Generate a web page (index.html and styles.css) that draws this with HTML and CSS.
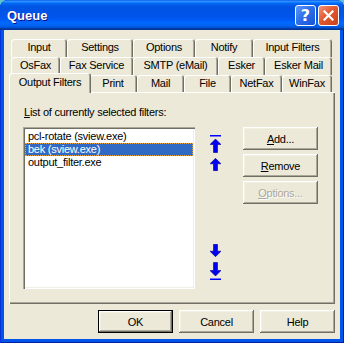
FILE: index.html
```html
<!DOCTYPE html>
<html>
  <head>
    <title>Queue</title>
    <link rel="stylesheet" href="styles.css">
  </head>
  <body>
    <div class="window">
      <div class="titlebar">
        <span class="title">Queue</span>
        <div class="caption-buttons">
          <div class="cap help">?</div>
          <div class="cap close">
            <svg width="11" height="11" viewBox="0 0 11 11">
              <path d="M1.5 1.5 L9.5 9.5 M9.5 1.5 L1.5 9.5" stroke="#fff" stroke-width="2.2" stroke-linecap="square" />
            </svg>
          </div>
        </div>
      </div>

      <div class="client">
        <div class="tabs">
          <div class="tab-row">
            <div class="tab" style="width: 56px">Input</div>
            <div class="tab" style="width: 66px">Settings</div>
            <div class="tab" style="width: 62px">Options</div>
            <div class="tab" style="width: 58px">Notify</div>
            <div class="tab" style="width: 79px">Input Filters</div>
          </div>
          <div class="tab-row">
            <div class="tab" style="width: 49px">OsFax</div>
            <div class="tab" style="width: 73px">Fax Service</div>
            <div class="tab" style="width: 85px">SMTP (eMail)</div>
            <div class="tab" style="width: 47px">Esker</div>
            <div class="tab" style="width: 67px">Esker Mail</div>
          </div>
          <div class="tab-row last">
            <div class="tab selected" style="width: 82px">Output Filters</div>
            <div class="tab" style="width: 48px">Print</div>
            <div class="tab" style="width: 47px">Mail</div>
            <div class="tab" style="width: 47px">File</div>
            <div class="tab" style="width: 51px">NetFax</div>
            <div class="tab" style="width: 50px">WinFax</div>
          </div>
        </div>

        <div class="panel">
          <div class="list-label"><u>L</u>ist of currently selected filters:</div>
          <div class="panel-body">
            <div class="listbox">
              <div class="item">pcl-rotate (sview.exe)</div>
              <div class="item selected">bek (sview.exe)</div>
              <div class="item">output_filter.exe</div>
            </div>

            <div class="arrows">
              <div class="arrow-group">
                <svg width="11" height="18" viewBox="0 0 11 18">
                  <rect x="0" y="0" width="11" height="1.5" fill="#0000ff" />
                  <polygon points="5.5,4 11,9.5 7.5,9.5 7.5,17.5 3.5,17.5 3.5,9.5 0,9.5" fill="#0000ee" stroke="#000090" stroke-width="0.6" />
                </svg>
                <svg width="11" height="13" viewBox="0 0 11 13">
                  <polygon points="5.5,0.3 11,5.8 7.5,5.8 7.5,12.7 3.5,12.7 3.5,5.8 0,5.8" fill="#0000ee" stroke="#000090" stroke-width="0.6" />
                </svg>
              </div>
              <div class="arrow-group">
                <svg width="11" height="13" viewBox="0 0 11 13">
                  <polygon points="5.5,12.7 11,7.2 7.5,7.2 7.5,0.3 3.5,0.3 3.5,7.2 0,7.2" fill="#0000ee" stroke="#000090" stroke-width="0.6" />
                </svg>
                <svg width="11" height="18" viewBox="0 0 11 18">
                  <polygon points="5.5,14 11,8.5 7.5,8.5 7.5,0.5 3.5,0.5 3.5,8.5 0,8.5" fill="#0000ee" stroke="#000090" stroke-width="0.6" />
                  <rect x="0" y="16.5" width="11" height="1.5" fill="#0000ff" />
                </svg>
              </div>
            </div>

            <div class="side-buttons">
              <div class="btn"><u>A</u>dd...</div>
              <div class="btn"><u>R</u>emove</div>
              <div class="btn disabled"><u>O</u>ptions...</div>
            </div>
          </div>
        </div>

        <div class="dialog-buttons">
          <div class="btn default">OK</div>
          <div class="btn">Cancel</div>
          <div class="btn">Help</div>
        </div>
      </div>
    </div>
  </body>
</html>
```

FILE: styles.css
```css
body {
  margin: 0;
  background-color: #5cc3cf;
  font-family: "Liberation Sans", Arial, sans-serif;
  font-size: 11px;
  letter-spacing: -0.25px;
  color: #000;
}
.window {
  width: 344px;
  height: 343px;
  box-sizing: border-box;
  padding: 0 4px 4px 4px;
  background-color: #0055ea;
  border-radius: 8px 8px 0 0;
  box-shadow: inset 1px 0 #0831d9, inset -1px -1px #001ea0;
  display: flex;
  flex-direction: column;
}
.titlebar {
  height: 30px;
  margin: 0 -4px;
  padding: 1px 5px 0 7px;
  box-sizing: border-box;
  display: flex;
  align-items: center;
  justify-content: space-between;
  border-radius: 8px 8px 0 0;
  background: linear-gradient(to bottom, #0058ee 0%, #3593ff 4%, #288eff 6%, #127dff 8%, #036ffc 10%, #0262ee 14%, #0057e5 20%, #0054e3 24%, #0055eb 56%, #005bf5 66%, #026afe 76%, #0062ef 86%, #0052d6 92%, #0040ab 94%, #003092 100%);
}
.title {
  color: #fff;
  font-weight: bold;
  font-size: 13px;
  letter-spacing: 0;
  text-shadow: 1px 1px #0f1089;
}
.caption-buttons {
  display: flex;
  gap: 2px;
}
.cap {
  width: 21px;
  height: 21px;
  box-sizing: border-box;
  border: 1px solid #fff;
  border-radius: 3px;
  display: flex;
  align-items: center;
  justify-content: center;
  color: #fff;
}
.help {
  background: linear-gradient(135deg, #5c9bff 0%, #2f6fea 45%, #1553d6 100%);
  font-family: "DejaVu Sans", sans-serif;
  font-weight: bold;
  font-size: 16px;
  letter-spacing: 0;
}
.close {
  background: linear-gradient(135deg, #f1957a 0%, #e2582f 45%, #c9411c 100%);
}
.client {
  flex: 1;
  background-color: #ece9d8;
  padding: 9px 5px 0 5px;
  display: flex;
  flex-direction: column;
}
.tabs {
  margin-left: 2px;
}
.tab-row {
  display: flex;
  height: 18px;
  align-items: flex-end;
}
.tab-row.last {
  height: 17px;
}
.tab {
  height: 18px;
  line-height: 17px;
  text-align: center;
  box-sizing: border-box;
  background-color: #ece9d8;
  border-radius: 3px 3px 0 0;
  box-shadow: inset 1px 1px #fff, inset -1px 0 #716f64, inset -2px 0 #aca899;
  white-space: nowrap;
}
.tab-row.last .tab {
  height: 17px;
}
.tab-row.last .tab.selected {
  height: 20px;
  line-height: 18px;
  margin: 0 -2px -1px -2px;
  position: relative;
  z-index: 2;
}
.panel {
  width: 326px;
  height: 212px;
  box-sizing: border-box;
  padding: 14px 14px 0 14px;
  box-shadow: inset 1px 1px #fff, inset -1px -1px #716f64, inset -2px -2px #aca899;
}
.list-label {
  line-height: 13px;
  margin-left: 1px;
  margin-bottom: 8px;
}
.panel-body {
  display: flex;
}
.listbox {
  width: 172px;
  height: 162px;
  box-sizing: border-box;
  padding: 3px 2px 2px 2px;
  background-color: #fff;
  box-shadow: inset 1px 1px #aca899, inset 2px 2px #716f64, inset -1px -1px #fff, inset -2px -2px #f1efe2;
}
.item {
  height: 13px;
  line-height: 13px;
  padding-left: 3px;
  white-space: nowrap;
}
.item.selected {
  background-color: #316ac5;
  color: #fff;
  outline: 1px dotted #e8a33c;
  outline-offset: -1px;
}
.arrows {
  margin-left: 15px;
  width: 11px;
  height: 162px;
  box-sizing: border-box;
  padding: 8px 0 9px 0;
  display: flex;
  flex-direction: column;
  justify-content: space-between;
}
.arrow-group {
  display: flex;
  flex-direction: column;
  gap: 5px;
}
.arrow-group svg {
  display: block;
}
.side-buttons {
  margin-left: 22px;
  display: flex;
  flex-direction: column;
  gap: 4px;
}
.btn {
  width: 75px;
  height: 23px;
  box-sizing: border-box;
  display: flex;
  align-items: center;
  justify-content: center;
  background-color: #ece9d8;
  box-shadow: inset -1px -1px #716f64, inset 1px 1px #fff, inset -2px -2px #aca899, inset 2px 2px #f1efe2;
}
.btn.disabled {
  color: #aca899;
  text-shadow: 1px 1px #fff;
}
.btn.default {
  border: 1px solid #000;
}
.dialog-buttons {
  margin-top: 6px;
  display: flex;
  justify-content: flex-end;
  gap: 6px;
}
```
